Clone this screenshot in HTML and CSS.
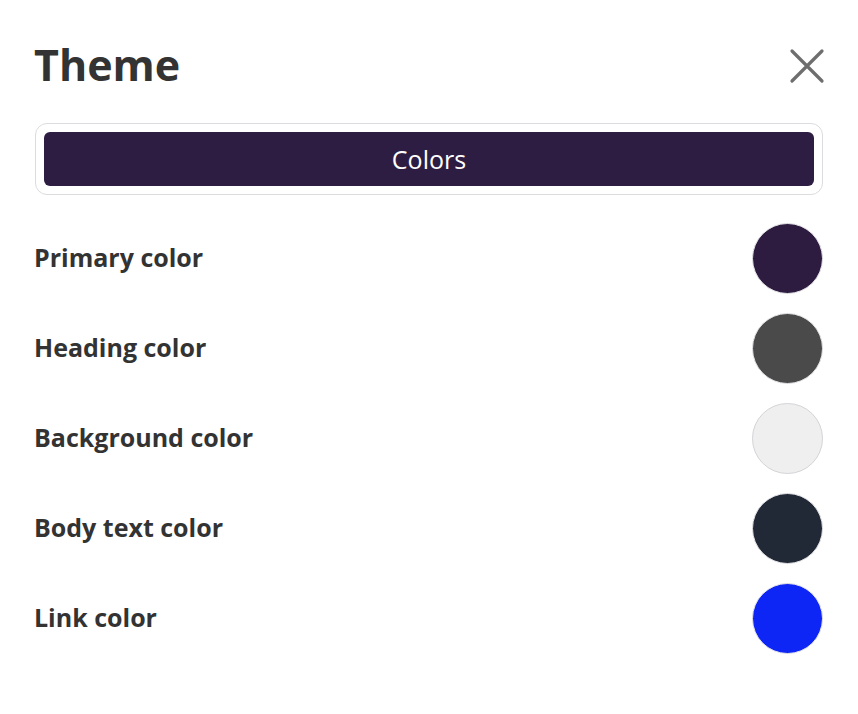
FILE: index.html
```html
<!DOCTYPE html>
<html lang="en">
<head>
<meta charset="utf-8">
<title>Theme</title>
<link rel="stylesheet" href="styles.css">
</head>
<body>
<div class="panel">
  <header class="head">
    <h1 class="title">Theme</h1>
    <button class="close" aria-label="Close">
      <svg width="36" height="36" viewBox="0 0 36 36"><path d="M3 3L33 33M33 3L3 33" stroke="#6e6e6e" stroke-width="3.2" stroke-linecap="round"/></svg>
    </button>
  </header>
  <div class="tabs">
    <button class="tab active">Colors</button>
  </div>
  <ul class="rows">
    <li class="row"><span class="label">Primary color</span><span class="swatch sw-primary"></span></li>
    <li class="row"><span class="label">Heading color</span><span class="swatch sw-heading"></span></li>
    <li class="row"><span class="label">Background color</span><span class="swatch sw-bg"></span></li>
    <li class="row"><span class="label">Body text color</span><span class="swatch sw-body"></span></li>
    <li class="row"><span class="label">Link color</span><span class="swatch sw-link"></span></li>
  </ul>
</div>
</body>
</html>
```
FILE: styles.css
```css
html, body {
  margin: 0;
  padding: 0;
  background: #fff;
}
body {
  font-family: "Open Sans", "Noto Sans", sans-serif;
  color: #333;
}
.panel {
  padding: 36px 35px 0 34px;
}
.head {
  display: flex;
  align-items: center;
  justify-content: space-between;
  height: 58px;
}
.title {
  margin: 0;
  font-size: 43px;
  font-weight: 700;
  color: #333;
  line-height: 58px;
}
.close {
  border: 0;
  background: none;
  padding: 0;
  width: 36px;
  height: 36px;
  margin-right: -2px;
  margin-top: 2px;
}
.close svg { display: block; }
.tabs {
  margin-top: 29px;
  margin-left: 1px;
  border: 1px solid #dcdcdf;
  border-radius: 12px;
  padding: 8px;
}
.tab {
  display: block;
  width: 100%;
  height: 54px;
  border: 0;
  border-radius: 6px;
  background: #2d1d42;
  color: #fff;
  font-family: "Open Sans", sans-serif;
  font-size: 25px;
  font-weight: 500;
}
.rows {
  list-style: none;
  margin: 18px 0 0 0;
  padding: 0;
}
.row {
  display: flex;
  align-items: center;
  justify-content: space-between;
  height: 90px;
}
.label {
  font-size: 25px;
  font-weight: 700;
  color: #333;
  margin-top: -2px;
}
.swatch {
  width: 71px;
  height: 71px;
  border-radius: 50%;
  box-sizing: border-box;
  border: 1px solid #e2e2e6;
}
.sw-primary { background: #2d1b40; }
.sw-heading { background: #4a4a4a; }
.sw-bg { background: #efefef; border-color: #d4d4d8; }
.sw-body { background: #222936; }
.sw-link { background: #0d26f5; }
```
